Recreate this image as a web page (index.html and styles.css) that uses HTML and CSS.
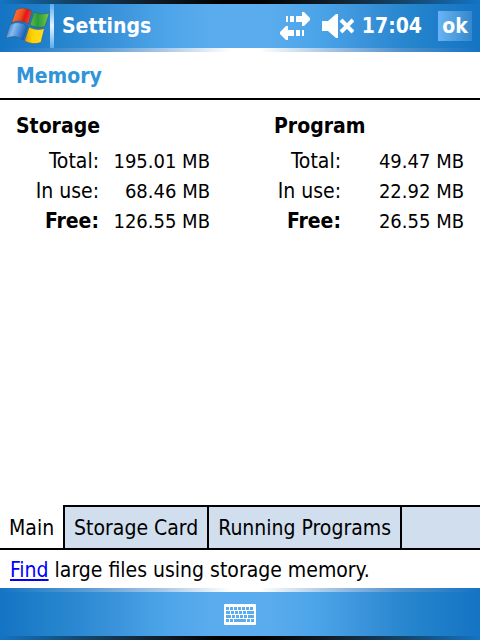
FILE: index.html
```html
<!DOCTYPE html>
<html lang="en">
<head>
  <meta charset="UTF-8">
  <meta name="viewport" content="width=device-width, initial-scale=1.0">
  <title>Settings - Memory</title>
  <link rel="stylesheet" href="styles.css">
</head>
<body>
  <header class="title-bar">
    <button class="start-btn" type="button" aria-label="Start">
      <svg width="46" height="40" viewBox="0 0 46 40">
        <defs>
          <linearGradient id="red" x1="0" y1="0" x2="1" y2="0.3">
            <stop offset="0" stop-color="#ff8a40"/>
            <stop offset="0.55" stop-color="#f05020"/>
            <stop offset="0.75" stop-color="#e01818"/>
            <stop offset="1" stop-color="#ee4424"/>
          </linearGradient>
          <linearGradient id="green" x1="0" y1="0" x2="1" y2="0">
            <stop offset="0" stop-color="#60b850"/>
            <stop offset="0.4" stop-color="#2c9c38"/>
            <stop offset="1" stop-color="#78c850"/>
          </linearGradient>
          <linearGradient id="blue" x1="0" y1="0.3" x2="1" y2="0.6">
            <stop offset="0" stop-color="#1860c0"/>
            <stop offset="0.35" stop-color="#88bcf0"/>
            <stop offset="1" stop-color="#0850b4"/>
          </linearGradient>
          <linearGradient id="yellow" x1="0" y1="0" x2="1" y2="0">
            <stop offset="0" stop-color="#d89c20"/>
            <stop offset="0.4" stop-color="#ffd400"/>
            <stop offset="1" stop-color="#ffdc30"/>
          </linearGradient>
        </defs>
        <g stroke="#285c80" stroke-opacity="0.6" stroke-width="1" stroke-linejoin="round">
          <path fill="url(#red)" d="M12 4Q15 2 19 2Q24 2.500 28 5L24.500 18Q20 15.500 15 15Q11 15 7.500 17Z"/>
          <path fill="url(#green)" d="M30 6Q36 9 45.500 7L41 20.500Q33 23 26 19Z"/>
          <path fill="url(#blue)" d="M6 18.500Q10 16.500 14 16.500Q19 17 23.500 20L19 34Q15 31 11 30.500Q6 30.500 1.500 32.500Z"/>
          <path fill="url(#yellow)" d="M25 21Q32 25 40.500 22.500L37 36.500Q33 38 28 37.500Q24 37 20.500 35Z"/>
        </g>
      </svg>
    </button>
    <h1 class="app-name">Settings</h1>
    <svg class="connection-icon" width="30" height="28" viewBox="0 0 30 28" fill="#fff" role="img" aria-label="Connected">
      <path d="M6 4h2v6H6zM10 4h4v6h-4zM16 4h6V0h2l6 6v2l-6 6h-2v-4h-6z"/>
      <path d="M24 18h-2v6h2zM20 18h-4v6h4zM14 18H8v-4H6l-6 6v2l6 6h2v-4h6z"/>
    </svg>
    <svg class="volume-icon" width="32" height="26" viewBox="0 0 32 26" role="img" aria-label="Sound off">
      <path d="M0 8h6L14 1h2v24h-2l-8-7H0z" fill="#fff"/>
      <path d="M19 7l12 12M31 7L19 19" stroke="#fff" stroke-width="4"/>
    </svg>
    <time class="clock">17:04</time>
    <button class="ok-btn" type="button">ok</button>
  </header>

  <h2 class="page-title">Memory</h2>

  <main class="memory">
    <section class="storage">
      <h3>Storage</h3>
      <table>
        <tr><th scope="row">Total:</th><td>195.01 MB</td></tr>
        <tr><th scope="row">In use:</th><td>68.46 MB</td></tr>
        <tr class="free"><th scope="row">Free:</th><td>126.55 MB</td></tr>
      </table>
    </section>
    <section class="program">
      <h3>Program</h3>
      <table>
        <tr><th scope="row">Total:</th><td>49.47 MB</td></tr>
        <tr><th scope="row">In use:</th><td>22.92 MB</td></tr>
        <tr class="free"><th scope="row">Free:</th><td>26.55 MB</td></tr>
      </table>
    </section>
  </main>

  <nav class="tabs">
    <button class="tab active" type="button">Main</button>
    <button class="tab" type="button">Storage Card</button>
    <button class="tab" type="button">Running Programs</button>
  </nav>

  <p class="hint"><a href="#">Find</a> large files using storage memory.</p>

  <footer class="menu-bar">
    <button class="keyboard-btn" type="button" aria-label="Keyboard">
      <svg width="32" height="21" viewBox="0 0 32 21">
        <rect width="32" height="21" rx="1" fill="#fff"/>
        <g stroke="#5aacee" stroke-width="3">
          <path d="M2 4.500h28" stroke-dasharray="3 1"/>
          <path d="M2 8.500h4M7 8.500h3M11 8.500h3M15 8.500h3M19 8.500h3M23 8.500h7"/>
          <path d="M2 12.500h5M8 12.500h3M12 12.500h3M16 12.500h3M20 12.500h3M24 12.500h6"/>
          <path d="M2 16.500h3M6 16.500h3M10 16.500h12M23 16.500h3M27 16.500h3"/>
        </g>
      </svg>
    </button>
  </footer>
</body>
</html>
```

FILE: styles.css
```css
* {
  box-sizing: border-box;
}

body {
  margin: 0;
  min-height: 100vh;
  display: flex;
  flex-direction: column;
  background-color: #fff;
  color: #000;
  font-family: Tahoma, "DejaVu Sans Condensed", "Noto Sans", sans-serif;
  font-size: 21px;
  line-height: 30px;
}

h1, h2, h3, p {
  margin: 0;
}

h1, h2, h3 {
  font-size: 21px;
}

button {
  border: none;
  padding: 0;
  background: none;
  color: inherit;
  font: inherit;
  cursor: pointer;
}

svg {
  display: block;
}

/* top and bottom bars */
.title-bar,
.menu-bar {
  height: 52px;
  display: flex;
  align-items: center;
  color: #fff;
}

.title-bar {
  padding: 4px 8px 4px 4px;
  background:
    linear-gradient(to right, #1474c4, #144468 14%, #101c28 32%, #000 46%, #000 54%, #101c28 68%, #144468 84%, #1474c4) top / 100% 4px no-repeat,
    linear-gradient(to right, #1474c4, #5c9cd4 20%, #a8c8e8 34%, #fff 48%, #fff 54%, #a8c8e8 68%, #5090cc 84%, #1474c4) bottom / 100% 4px no-repeat,
    linear-gradient(to right, #1474c4, #2484cc 12%, #3c94dc 25%, #4ca4e8 34%, #5aacee 44%, #5aacee 56%, #4ca4e8 66%, #3c94dc 75%, #2484cc 86%, #1474c4);
}

.menu-bar {
  justify-content: center;
  background:
    linear-gradient(to right, #1474c4, #5c9cd4 18%, #a8c8e8 34%, #fff 48%, #fff 54%, #a8c8e8 68%, #5090cc 84%, #1474c4) top / 100% 4px no-repeat,
    linear-gradient(to right, #1474c4, #144468 18%, #101c28 34%, #000 46%, #000 54%, #101c28 68%, #144468 84%, #1474c4) bottom / 100% 4px no-repeat,
    linear-gradient(to right, #1474c4, #2484cc 12%, #3c94dc 25%, #4ca4e8 34%, #5aacee 44%, #5aacee 56%, #4ca4e8 66%, #3c94dc 75%, #2484cc 86%, #1474c4);
}

.start-btn {
  height: 44px;
  width: 50px;
  padding-right: 4px;
  background: linear-gradient(#5aacee, #e8f4ff 50%, #5aacee) right / 4px 100% no-repeat;
}

.app-name {
  margin-left: 8px;
  flex: 1;
}

.volume-icon {
  margin-left: 12px;
}

.clock {
  margin-left: 8px;
  font-weight: bold;
}

.ok-btn {
  width: 34px;
  height: 30px;
  margin-left: 16px;
  background: linear-gradient(to right, #68b4f4, #3488cc);
  font-weight: bold;
}

.page-title {
  padding: 9px 16px 7px;
  border-bottom: 2px solid #000;
  color: #3094d8;
}

/* memory figures */
.memory {
  flex: 1;
  display: flex;
  justify-content: space-between;
  padding: 11px 16px;
}

.memory h3 {
  margin-bottom: 5px;
}

.memory table {
  width: 100%;
  border-collapse: collapse;
}

.memory th,
.memory td {
  padding: 0;
  text-align: right;
  font-weight: normal;
  white-space: nowrap;
}

.memory td {
  font-size: 20px;
}

.memory .free th {
  font-weight: bold;
}

.storage {
  width: 194px;
}

.program {
  width: 190px;
}

.storage th {
  width: 83px;
}

.program th {
  width: 67px;
}

/* tabs */
.tabs {
  height: 45px;
  display: flex;
  background-color: #d0deee;
  border-top: 2px solid #000;
  border-bottom: 2px solid #000;
}

.tab {
  padding: 1px 9px 0;
  border-right: 2px solid #000;
}

/* covers the strip's top line, keeps the bottom one */
.tab.active {
  margin: -2px 0;
  padding-top: 3px;
  background-color: #fff;
  border-bottom: 2px solid #000;
}

.hint {
  padding: 5px 10px 3px;
}

.hint a {
  color: #00f;
}
```
